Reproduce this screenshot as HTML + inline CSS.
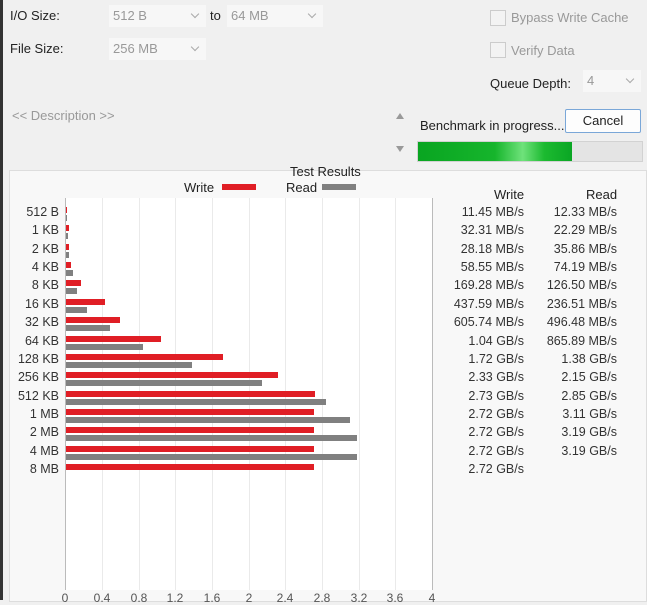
<!DOCTYPE html><html><head><style>
body{margin:0;width:647px;height:600px;background:#f0f0f0;font-family:"Liberation Sans",sans-serif;font-size:13px;color:#222;position:relative;overflow:hidden}
.a{position:absolute;white-space:nowrap}
.sel{position:absolute;background:#f7f7f7;color:#999;height:22px;line-height:22px;padding-left:4px;box-sizing:border-box}
.sel:after{content:"";position:absolute;right:8px;top:6px;width:5px;height:5px;border-right:1px solid #aaa;border-bottom:1px solid #aaa;transform:rotate(45deg)}
.cb{position:absolute;width:14px;height:14px;border:1px solid #ccc;background:#f3f3f3}
.lbl{position:absolute;right:588px;font-size:12.5px;color:#333}
.w,.r{position:absolute;height:6px}
.w{background:#e01e25}.r{background:#808080}
.v{position:absolute;font-size:12.5px;color:#333;text-align:right}
.g{position:absolute;top:198px;height:392px;width:1px;background:#eaeaea}
.t{position:absolute;top:591px;font-size:12px;color:#555;width:30px;margin-left:-15px;text-align:center}
</style></head><body>
<div class="a" style="left:0;top:0;width:3px;height:600px;background:#333"></div>
<div class="a" style="left:10px;top:8px">I/O Size:</div>
<div class="sel" style="left:109px;top:5px;width:97px">512 B</div>
<div class="a" style="left:210px;top:8px">to</div>
<div class="sel" style="left:227px;top:5px;width:96px">64 MB</div>
<div class="a" style="left:10px;top:41px">File Size:</div>
<div class="sel" style="left:109px;top:38px;width:97px">256 MB</div>
<div class="cb" style="left:490px;top:10px"></div><div class="a" style="left:511px;top:10px;color:#999">Bypass Write Cache</div>
<div class="cb" style="left:490px;top:42px"></div><div class="a" style="left:511px;top:43px;color:#999">Verify Data</div>
<div class="a" style="left:490px;top:76px">Queue Depth:</div>
<div class="sel" style="left:583px;top:70px;width:58px">4</div>
<div class="a" style="left:12px;top:108px;color:#999">&lt;&lt; Description &gt;&gt;</div>
<div class="a" style="left:396px;top:113px;width:0;height:0;border:4px solid transparent;border-bottom:6px solid #999;border-top:0"></div>
<div class="a" style="left:396px;top:146px;width:0;height:0;border:4px solid transparent;border-top:6px solid #999;border-bottom:0"></div>
<div class="a" style="left:420px;top:118px">Benchmark in progress...</div>
<div class="a" style="left:565px;top:109px;width:74px;height:22px;border:1px solid #7aa7d8;background:#fdfdfd;border-radius:2px;text-align:center;line-height:22px">Cancel</div>
<div class="a" style="left:417px;top:141px;width:224px;height:19px;background:#e4e4e4;border:1px solid #d2d2d2"></div>
<div class="a" style="left:418px;top:142px;width:154px;height:19px;background:linear-gradient(90deg,#09a521 0%,#16b52c 50%,#6fe27b 68%,#1cba30 82%,#0aa624 100%)"></div>
<div class="a" style="left:9px;top:170px;width:636px;height:430px;background:#f8f8f8;border:1px solid #ddd"></div>
<div class="a" style="left:290px;top:164px">Test Results</div>
<div class="a" style="left:184px;top:180px">Write</div><div class="a" style="left:222px;top:184px;width:34px;height:6px;background:#e01e25"></div>
<div class="a" style="left:286px;top:180px">Read</div><div class="a" style="left:322px;top:184px;width:34px;height:6px;background:#808080"></div>
<div class="a" style="left:65px;top:198px;width:367px;height:392px;background:#fff;border-left:1px solid #bbb"></div>
<div class="g" style="left:102px"></div><div class="g" style="left:139px"></div><div class="g" style="left:175px"></div><div class="g" style="left:212px"></div><div class="g" style="left:249px"></div><div class="g" style="left:285px"></div><div class="g" style="left:322px"></div><div class="g" style="left:359px"></div><div class="g" style="left:395px"></div><div class="g" style="left:432px;background:#bbb"></div>
<div class="t" style="left:65px">0</div><div class="t" style="left:102px">0.4</div><div class="t" style="left:139px">0.8</div><div class="t" style="left:175px">1.2</div><div class="t" style="left:212px">1.6</div><div class="t" style="left:249px">2</div><div class="t" style="left:285px">2.4</div><div class="t" style="left:322px">2.8</div><div class="t" style="left:359px">3.2</div><div class="t" style="left:395px">3.6</div><div class="t" style="left:432px">4</div>
<div class="a" style="left:494px;top:187px">Write</div><div class="a" style="left:586px;top:187px">Read</div>
<div id="rows"></div>
<script>
var d=[["512 B",11.45/1024,12.33/1024,"11.45 MB/s","12.33 MB/s"],["1 KB",32.31/1024,22.29/1024,"32.31 MB/s","22.29 MB/s"],["2 KB",28.18/1024,35.86/1024,"28.18 MB/s","35.86 MB/s"],["4 KB",58.55/1024,74.19/1024,"58.55 MB/s","74.19 MB/s"],["8 KB",169.28/1024,126.5/1024,"169.28 MB/s","126.50 MB/s"],["16 KB",437.59/1024,236.51/1024,"437.59 MB/s","236.51 MB/s"],["32 KB",605.74/1024,496.48/1024,"605.74 MB/s","496.48 MB/s"],["64 KB",1.04,865.89/1024,"1.04 GB/s","865.89 MB/s"],["128 KB",1.72,1.38,"1.72 GB/s","1.38 GB/s"],["256 KB",2.33,2.15,"2.33 GB/s","2.15 GB/s"],["512 KB",2.73,2.85,"2.73 GB/s","2.85 GB/s"],["1 MB",2.72,3.11,"2.72 GB/s","3.11 GB/s"],["2 MB",2.72,3.19,"2.72 GB/s","3.19 GB/s"],["4 MB",2.72,3.19,"2.72 GB/s","3.19 GB/s"],["8 MB",2.72,0,"2.72 GB/s",""]];
var h="";d.forEach(function(r,i){var c=213+i*18.36;
h+='<div class="lbl" style="top:'+(c-8)+'px">'+r[0]+'</div>';
h+='<div class="w" style="left:66px;top:'+(c-6)+'px;width:'+Math.max(1,r[1]*91.2)+'px"></div>';
if(r[2])h+='<div class="r" style="left:66px;top:'+(c+2)+'px;width:'+Math.max(1,r[2]*91.2)+'px"></div>';
h+='<div class="v" style="right:123px;top:'+(c-8)+'px">'+r[3]+'</div><div class="v" style="right:30px;top:'+(c-8)+'px">'+r[4]+'</div>';});
document.getElementById("rows").innerHTML=h;
</script>
</body></html>
